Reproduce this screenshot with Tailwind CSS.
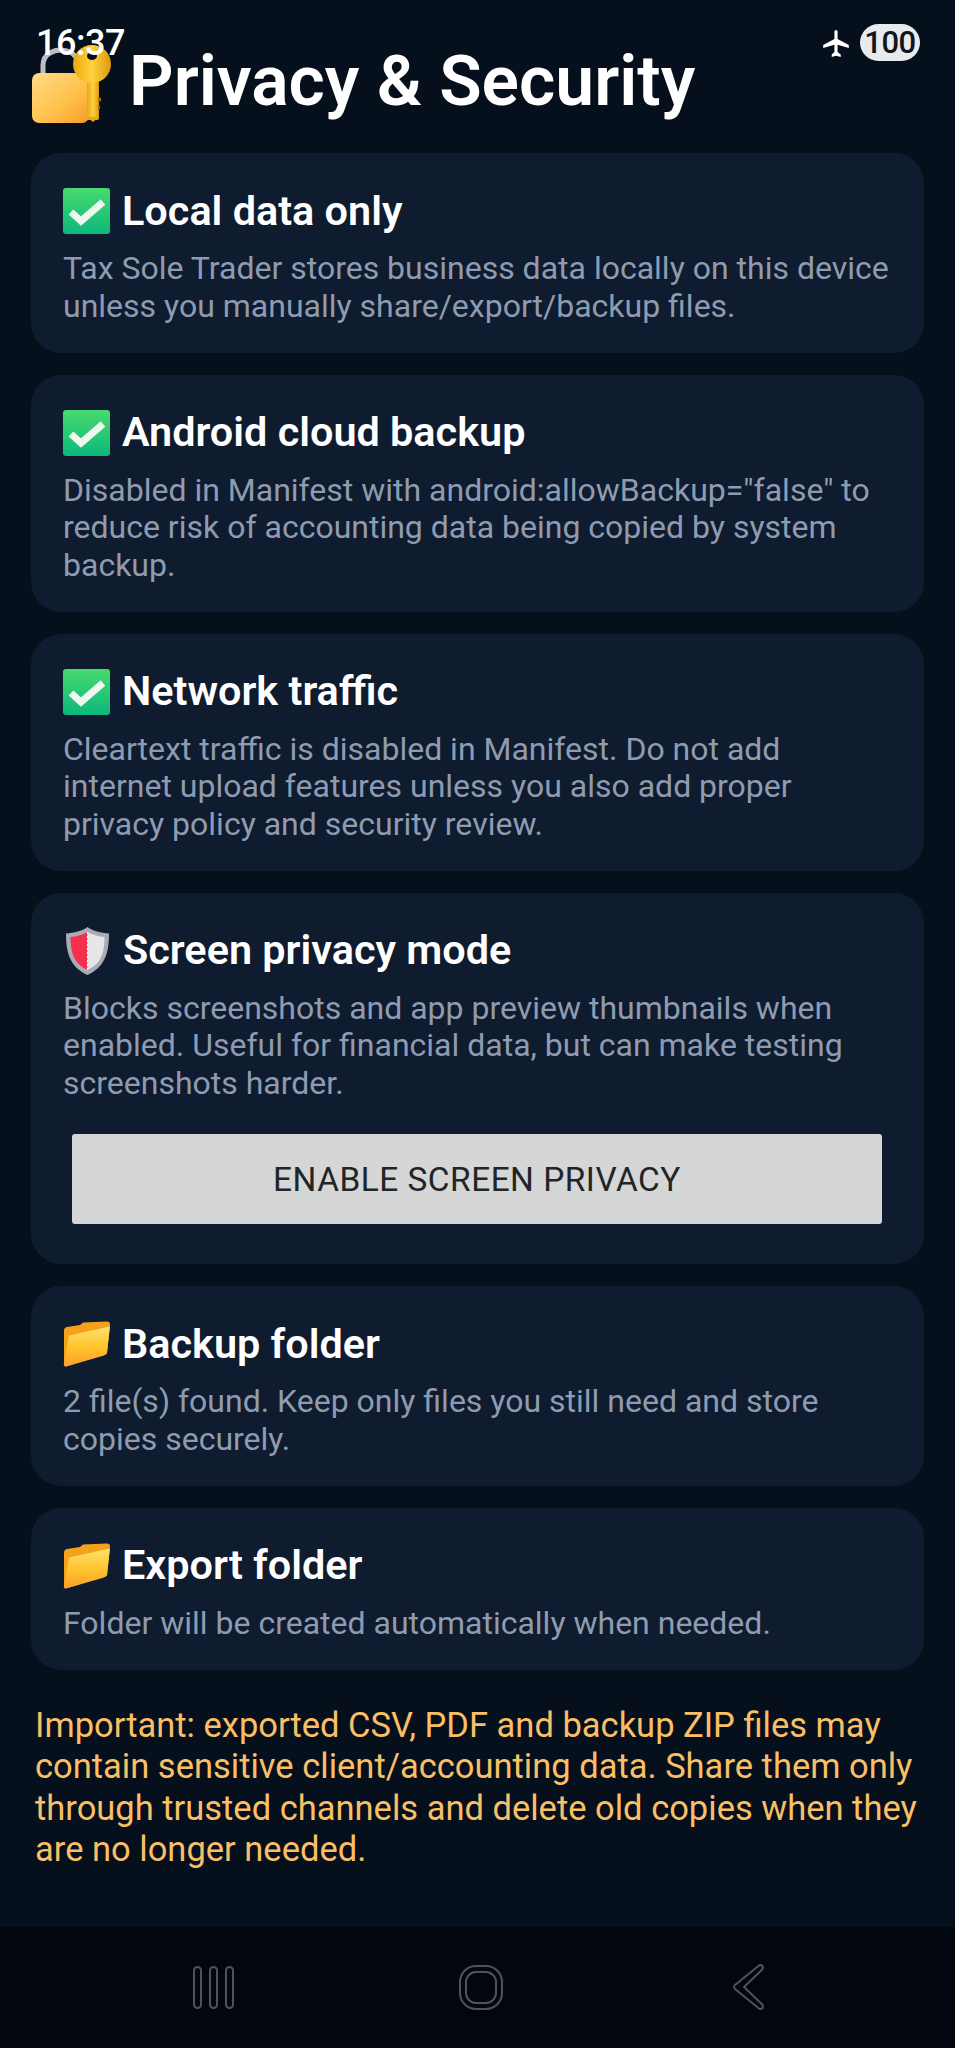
<!DOCTYPE html>
<html lang="en">
<head>
    <meta charset="UTF-8">
    <meta name="viewport" content="width=device-width, initial-scale=1.0">
    <title>Privacy &amp; Security</title>
    <script src="https://cdn.jsdelivr.net/npm/@tailwindcss/browser@4"></script>
</head>
<body class="bg-[#060f1c] font-['Roboto',sans-serif]">
    <!-- Shared emoji drawings -->
    <svg class="absolute w-0 h-0" width="0" height="0">
        <defs>
            <linearGradient id="checkBg" x1="0" y1="0" x2="0" y2="1">
                <stop offset="0" stop-color="#48da6e"/>
                <stop offset="1" stop-color="#0cb87c"/>
            </linearGradient>
            <linearGradient id="folderFront" x1="0" y1="0" x2="0" y2="1">
                <stop offset="0" stop-color="#ffe070"/>
                <stop offset="0.5" stop-color="#ffc62e"/>
                <stop offset="1" stop-color="#fb9f2a"/>
            </linearGradient>
            <linearGradient id="lockBody" x1="0" y1="0" x2="1" y2="1">
                <stop offset="0" stop-color="#ffdc84"/>
                <stop offset="0.6" stop-color="#ffc04a"/>
                <stop offset="1" stop-color="#f79a2a"/>
            </linearGradient>
            <linearGradient id="keyGold" x1="0" y1="0" x2="1" y2="0">
                <stop offset="0" stop-color="#e9a80f"/>
                <stop offset="0.5" stop-color="#ffd23f"/>
                <stop offset="1" stop-color="#dd980c"/>
            </linearGradient>
            <symbol id="check" viewBox="0 0 47 46">
                <rect width="47" height="46" rx="3" fill="url(#checkBg)"/>
                <path d="M8 24l10 9L40 14" fill="none" stroke="#eef7f0" stroke-width="7"/>
            </symbol>
            <symbol id="folder" viewBox="0 0 47 45">
                <path d="M1 9Q1 6 4 5.500L17 3.500L20 1L44 0Q47 0 47 3L44 32L3 45Q1 45 1 42Z" fill="#f4a21c"/>
                <path d="M6 14L47 5L44 31Q44 33 41 34L3 45Q0 45 1 42Z" fill="url(#folderFront)"/>
            </symbol>
        </defs>
    </svg>

    <div class="relative w-[955px] h-[2048px] flex flex-col overflow-hidden">
        <!-- Status bar -->
        <div class="absolute top-0 left-0 w-full z-10">
            <span class="absolute left-[36px] top-[22px] text-[36px] leading-[42px] font-medium tracking-[-0.5px] text-white">16:37</span>
            <svg class="absolute left-[822px] top-[30px]" width="28" height="27" viewBox="0 0 24 24" fill="#fff">
                <path d="M10.600 1.500c0-.8.600-1.500 1.400-1.500s1.400.7 1.400 1.500V8l10 5.400v2.500l-10-2.700v6.300l2.800 2.200V24L12 22.800 8.200 24v-2.300l2.400-2.200v-6.300l-10 2.700v-2.500l10-5.400z"/>
            </svg>
            <span class="absolute left-[860px] top-[24px] w-[60px] h-[37px] rounded-full bg-[#e8eaee] text-[#10141c] text-[31px] leading-[37px] font-medium text-center tracking-[-0.5px]">100</span>
        </div>

        <main class="flex-1 flex flex-col px-[31px]">
            <!-- Heading -->
            <div class="h-[153px] pt-[43px] flex items-start">
                <svg class="mt-[2px] shrink-0" width="80" height="80" viewBox="0 0 80 80">
                    <path d="M12 30V20C12 8 24 5 30 5s14 3 16 10" fill="none" stroke="#b9bec4" stroke-width="5"/>
                    <rect x="1" y="28" width="57" height="50" rx="7" fill="url(#lockBody)"/>
                    <rect x="56" y="30" width="12" height="45" rx="2" fill="url(#keyGold)"/>
                    <path d="M67 52l3 1v3l-3 1v3l2 1v3l-2 1z" fill="#a86c08"/>
                    <path d="M56 72l6 5 6-5z" fill="#e9a80f"/>
                    <circle cx="61" cy="19" r="19" fill="url(#keyGold)"/>
                    <ellipse cx="61" cy="11" rx="5" ry="4" fill="#060f1c"/>
                </svg>
                <h1 class="ml-[18px] text-[69.600px] leading-[76px] font-semibold text-white">Privacy &amp; Security</h1>
            </div>

            <div class="flex flex-col gap-[22px]">
                <section class="bg-[#0f1b2e] rounded-[30px] px-[32px] pt-[34px] pb-[27.500px]">
                    <h2 class="flex items-center gap-[12px] h-[48px] text-[41.400px] font-semibold text-white">
                        <svg class="shrink-0" width="47" height="46"><use href="#check"/></svg>Local data only
                    </h2>
                    <p class="mt-[15px] text-[32px] leading-[37.500px] text-[#8f9bb0]">Tax Sole Trader stores business data locally on this device unless you manually share/export/backup files.</p>
                </section>

                <section class="bg-[#0f1b2e] rounded-[30px] px-[32px] pt-[34px] pb-[27.500px]">
                    <h2 class="flex items-center gap-[12px] h-[48px] text-[41.400px] font-semibold text-white">
                        <svg class="shrink-0" width="47" height="46"><use href="#check"/></svg>Android cloud backup
                    </h2>
                    <p class="mt-[15px] text-[32px] leading-[37.500px] text-[#8f9bb0]">Disabled in Manifest with android:allowBackup="false" to reduce risk of accounting data being copied by system backup.</p>
                </section>

                <section class="bg-[#0f1b2e] rounded-[30px] px-[32px] pt-[34px] pb-[27.500px]">
                    <h2 class="flex items-center gap-[12px] h-[48px] text-[41.400px] font-semibold text-white">
                        <svg class="shrink-0" width="47" height="46"><use href="#check"/></svg>Network traffic
                    </h2>
                    <p class="mt-[15px] text-[32px] leading-[37.500px] text-[#8f9bb0]">Cleartext traffic is disabled in Manifest. Do not add internet upload features unless you also add proper privacy policy and security review.</p>
                </section>

                <section class="bg-[#0f1b2e] rounded-[30px] px-[32px] pt-[34px] pb-[40px]">
                    <h2 class="flex items-center gap-[12px] h-[48px] text-[41.400px] font-semibold text-white">
                        <svg class="shrink-0 ml-[3px] mr-[2px]" width="43" height="48" viewBox="0 0 43 48">
                            <path d="M21.500 0C16 4 8 6 0 6.500C0 26 4 40 21.500 48C39 40 43 26 43 6.500C35 6 27 4 21.500 0Z" fill="#a9adb3"/>
                            <path d="M21.500 5C16 8 10 9.500 4.500 10C4.500 26 8 37 21.500 43Z" fill="#f4304f"/>
                            <path d="M21.500 5C27 8 33 9.500 38.500 10C38.500 26 35 37 21.500 43Z" fill="#e6e6ea"/>
                            <path d="M21.500 5V43" stroke="#fff" stroke-width="1" stroke-dasharray="2 2"/>
                        </svg>Screen privacy mode
                    </h2>
                    <p class="mt-[15px] text-[32px] leading-[37.500px] text-[#8f9bb0]">Blocks screenshots and app preview thumbnails when enabled. Useful for financial data, but can make testing screenshots harder.</p>
                    <button class="mt-[32px] w-[810px] ml-[9px] h-[90px] pt-[3px] rounded-[3px] bg-[#d5d7d6] text-[#222426] text-[33.400px] tracking-[0.5px] uppercase">Enable screen privacy</button>
                </section>

                <section class="bg-[#0f1b2e] rounded-[30px] px-[32px] pt-[34px] pb-[27.500px]">
                    <h2 class="flex items-center gap-[12px] h-[48px] text-[41.400px] font-semibold text-white">
                        <svg class="shrink-0" width="47" height="46"><use href="#folder"/></svg>Backup folder
                    </h2>
                    <p class="mt-[15px] text-[32px] leading-[37.500px] text-[#8f9bb0]">2 file(s) found. Keep only files you still need and store copies securely.</p>
                </section>

                <section class="bg-[#0f1b2e] rounded-[30px] px-[32px] pt-[34px] pb-[27.500px]">
                    <h2 class="flex items-center gap-[12px] h-[48px] text-[41.400px] font-semibold text-white">
                        <svg class="shrink-0" width="47" height="46"><use href="#folder"/></svg>Export folder
                    </h2>
                    <p class="mt-[15px] text-[32px] leading-[37.500px] text-[#8f9bb0]">Folder will be created automatically when needed.</p>
                </section>
            </div>

            <p class="mt-[35px] ml-[4px] text-[34.500px] leading-[41.500px] text-[#f9bf66]">Important: exported CSV, PDF and backup ZIP files may contain sensitive client/accounting data. Share them only through trusted channels and delete old copies when they are no longer needed.</p>
        </main>

        <!-- Navigation bar -->
        <nav class="h-[121px] shrink-0 bg-[#02060f] relative">
            <svg class="absolute left-[193px] top-[39px]" width="41" height="43" viewBox="0 0 41 43" fill="none" stroke="#4e525b" stroke-width="2">
                <rect x="1" y="1" width="7" height="41" rx="3.500"/>
                <rect x="17" y="1" width="7" height="41" rx="3.500"/>
                <rect x="33" y="1" width="7" height="41" rx="3.500"/>
            </svg>
            <svg class="absolute left-[459px] top-[38px]" width="44" height="45" viewBox="0 0 44 45" fill="none" stroke="#4e525b" stroke-width="2">
                <rect x="1" y="1" width="42" height="43" rx="16"/>
                <rect x="7" y="7" width="30" height="31" rx="10"/>
            </svg>
            <svg class="absolute left-[733px] top-[37px]" width="31" height="46" viewBox="0 0 31 46" fill="none" stroke="#4e525b" stroke-width="2">
                <path d="M26 1.500c1.500-1.200 4-.2 4 2 0 .8-.3 1.400-.8 2L11 23l18.200 17.500c.5.600.8 1.200.8 2 0 2.200-2.500 3.200-4 2L2 25c-1.300-1.200-1.300-3 0-4z"/>
            </svg>
        </nav>
    </div>
</body>
</html>
